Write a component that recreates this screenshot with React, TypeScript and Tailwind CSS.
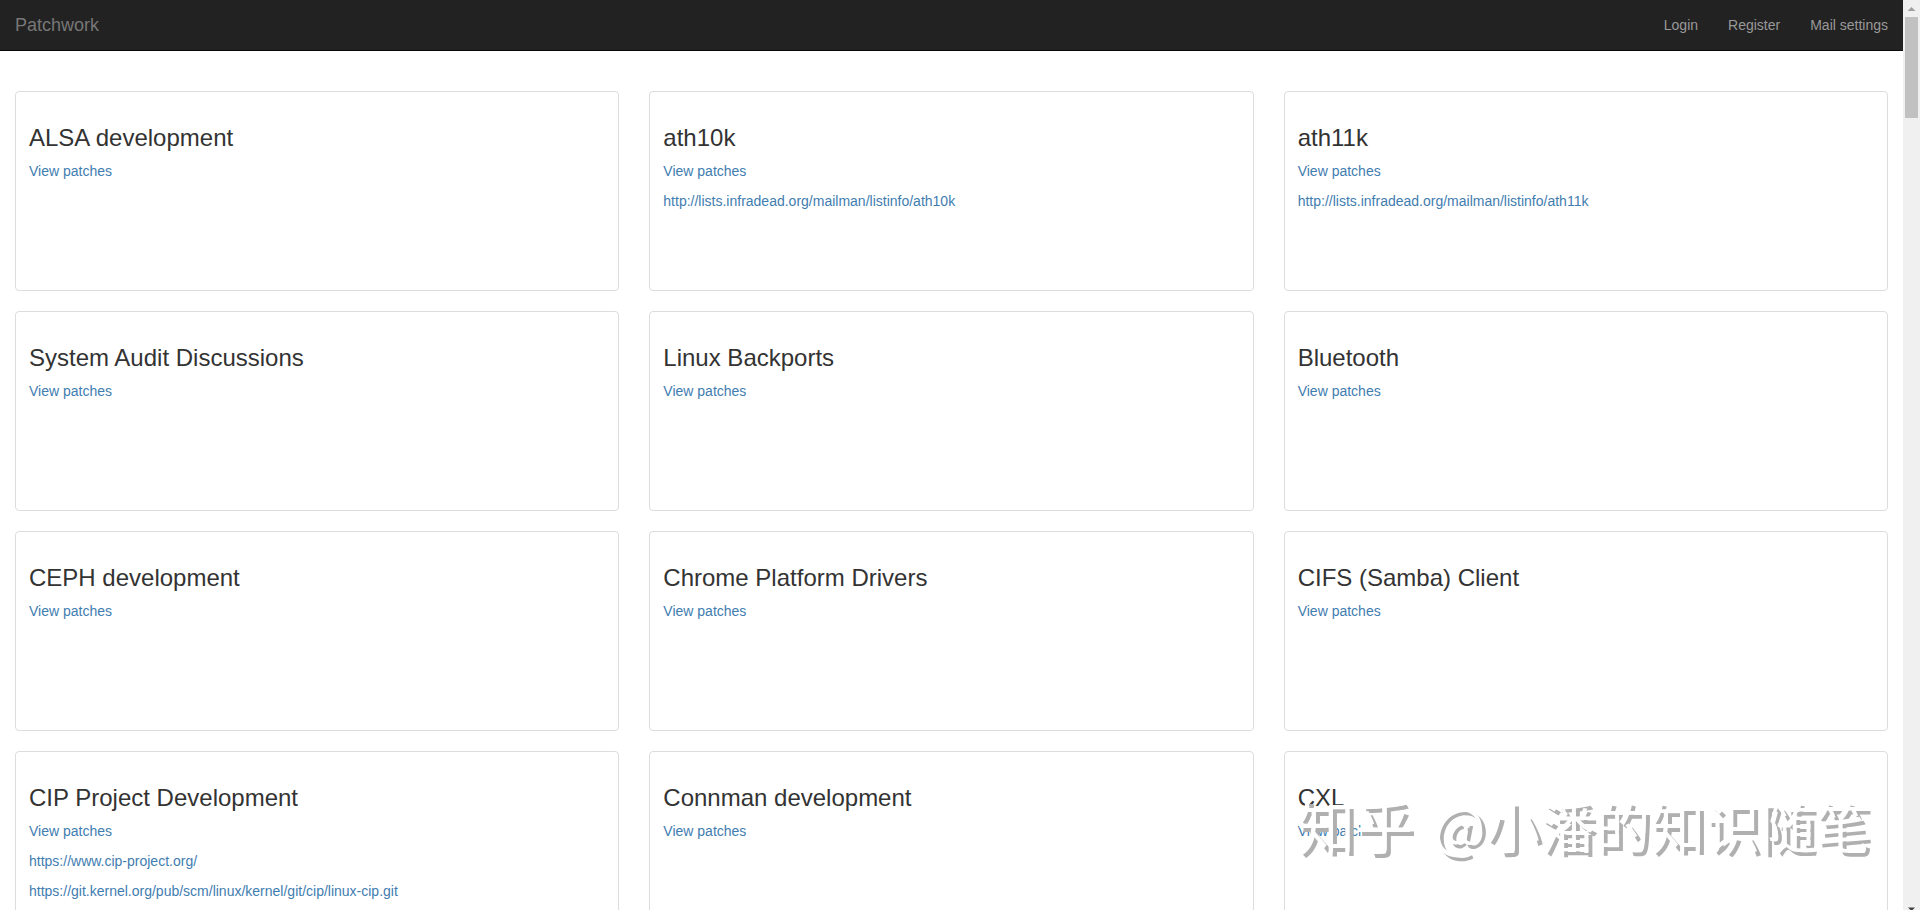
const navLinks = ["Login", "Register", "Mail settings"];

const projects: { name: string; links?: string[] }[] = [
  { name: "ALSA development" },
  {
    name: "ath10k",
    links: ["http://lists.infradead.org/mailman/listinfo/ath10k"],
  },
  {
    name: "ath11k",
    links: ["http://lists.infradead.org/mailman/listinfo/ath11k"],
  },
  { name: "System Audit Discussions" },
  { name: "Linux Backports" },
  { name: "Bluetooth" },
  { name: "CEPH development" },
  { name: "Chrome Platform Drivers" },
  { name: "CIFS (Samba) Client" },
  {
    name: "CIP Project Development",
    links: [
      "https://www.cip-project.org/",
      "https://git.kernel.org/pub/scm/linux/kernel/git/cip/linux-cip.git",
    ],
  },
  { name: "Connman development" },
  { name: "CXL" },
];

const Navbar = () => {
  return (
    <nav className="flex justify-between items-center bg-[#222] border-b border-[#080808] px-[15px] h-[51px]">
      <a href="#" className="text-lg leading-5 text-[#777]">
        Patchwork
      </a>
      <div className="flex gap-[30px] leading-5 text-[#999]">
        {navLinks.map((label) => (
          <a key={label} href="#">
            {label}
          </a>
        ))}
      </div>
    </nav>
  );
};

const ProjectCard = ({ name, links = [] }: { name: string; links?: string[] }) => {
  return (
    <div className="h-[200px] border border-[#ddd] rounded px-[13px] pt-[33px] overflow-hidden">
      <h3 className="text-2xl leading-[26px] mb-[10px]">{name}</h3>
      <div className="flex flex-col items-start gap-[10px] leading-5 text-[#3f7db0]">
        <a href="#">View patches</a>
        {links.map((link) => (
          <a key={link} href={link}>
            {link}
          </a>
        ))}
      </div>
    </div>
  );
};

const Scrollbar = () => {
  return (
    <div className="flex flex-col justify-between items-center w-[17px] shrink-0 bg-[#f0f0f0]">
      <div className="flex flex-col items-center w-full">
        <svg className="w-[17px] h-[17px]" viewBox="0 0 17 17" fill="#a0a0a0">
          <path d="M8.5 7 L12.5 11 H4.5 Z" />
        </svg>
        <div className="w-[13px] h-[101px] bg-[#c1c1c1]" />
      </div>
      <svg className="w-[17px] h-[3px]" viewBox="0 0 17 3" fill="#404040">
        <path d="M5 0.5 H12 L9.5 3 H7.5 Z" />
      </svg>
    </div>
  );
};

const App = () => {
  return (
    <div className="relative flex h-screen overflow-hidden bg-white text-sm text-[#333] font-['Liberation_Sans',Arial,sans-serif]">
      <div className="flex-1 min-w-0 overflow-y-auto [scrollbar-width:none]">
        <Navbar />
        <main className="grid grid-cols-3 gap-x-[30px] gap-y-5 px-[15px] pt-10 pb-5">
          {projects.map((project) => (
            <ProjectCard key={project.name} {...project} />
          ))}
        </main>
      </div>
      <Scrollbar />

      {/* Watermark */}
      <div className="absolute right-[50px] bottom-[46px] flex items-center gap-5 whitespace-nowrap pointer-events-none text-white text-[55px] leading-[80px] font-['Noto_Sans_CJK_SC',sans-serif] [text-shadow:4px_4px_0_#b0b0b0]">
        <span className="text-[58px] leading-[80px]">知乎</span>
        <span>@小潘的知识随笔</span>
      </div>
    </div>
  );
};

export default App;
